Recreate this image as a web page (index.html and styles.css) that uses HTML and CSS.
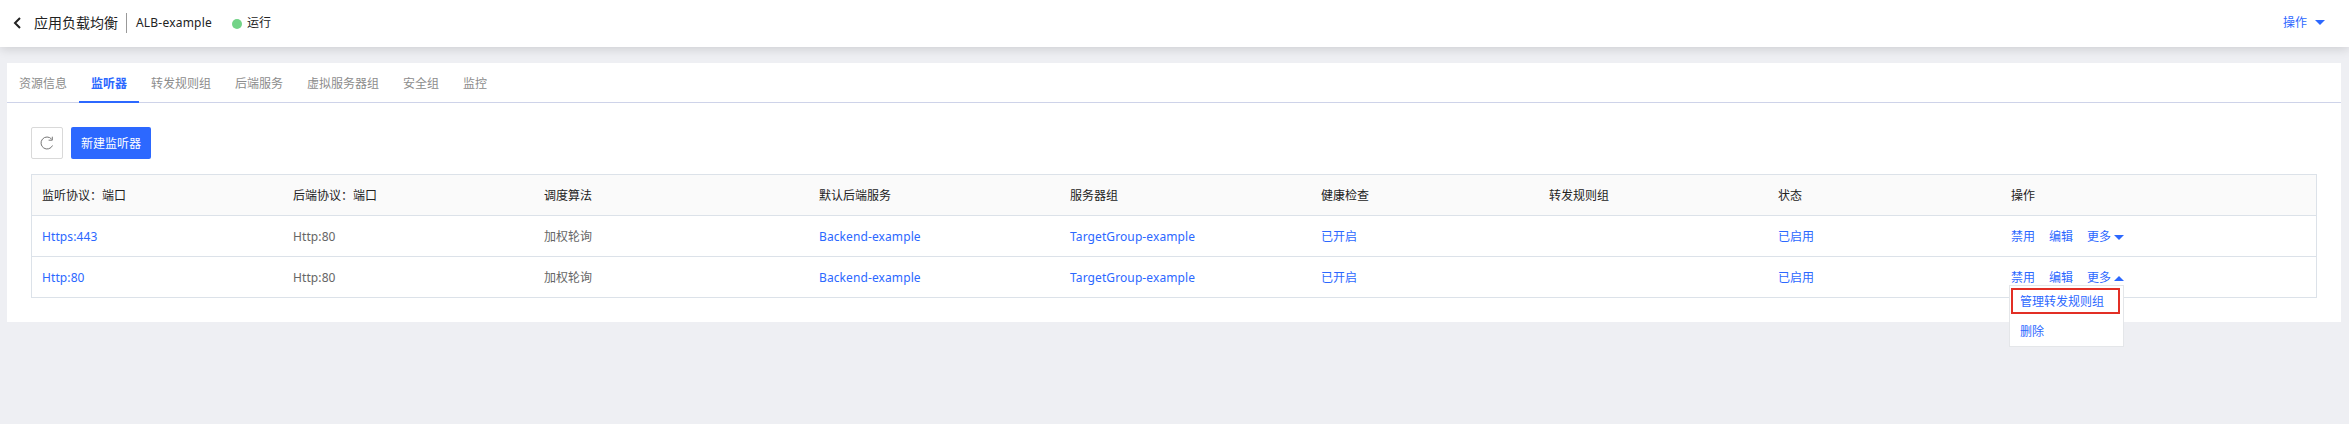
FILE: index.html
```html
<!DOCTYPE html>
<html lang="zh-CN">
<head>
<meta charset="utf-8">
<title>应用负载均衡</title>
<link rel="stylesheet" href="styles.css">
</head>
<body>
<header class="topbar">
  <svg class="back" width="8" height="12" viewBox="0 0 8 12"><path d="M7 1 2 6l5 5" fill="none" stroke="#222" stroke-width="2"/></svg>
  <h1 class="title">应用负载均衡</h1>
  <span class="name latin">ALB-example</span>
  <span class="dot"></span>
  <span class="state">运行</span>
  <a class="top-action">操作<svg class="caret" width="10" height="5" viewBox="0 0 10 5"><path d="M0 0h10L5 5z"/></svg></a>
</header>
<main class="panel">
  <nav class="tabs">
    <a class="tab">资源信息</a>
    <a class="tab active">监听器</a>
    <a class="tab">转发规则组</a>
    <a class="tab">后端服务</a>
    <a class="tab">虚拟服务器组</a>
    <a class="tab">安全组</a>
    <a class="tab">监控</a>
  </nav>
  <div class="toolbar">
    <button class="refresh"><svg width="14" height="14" viewBox="0 0 14 14"><path d="M11.6 3.1A6 6 0 1 0 12.5 9.5M12.3.7v3.5H8.6" fill="none" stroke="#777" stroke-width="1"/></svg></button>
    <button class="create">新建监听器</button>
  </div>
  <div class="table">
    <div class="row head">
      <span>监听协议：端口</span><span>后端协议：端口</span><span>调度算法</span><span>默认后端服务</span><span>服务器组</span><span>健康检查</span><span>转发规则组</span><span>状态</span><span>操作</span>
    </div>
    <div class="row">
      <a class="latin">Https:443</a><span class="latin">Http:80</span><span>加权轮询</span><a class="latin">Backend-example</a><a class="latin">TargetGroup-example</a><a>已开启</a><span></span><a>已启用</a>
      <div class="actions"><a>禁用</a><a>编辑</a><a>更多<svg class="caret" width="10" height="5" viewBox="0 0 10 5"><path d="M0 0h10L5 5z"/></svg></a></div>
    </div>
    <div class="row">
      <a class="latin">Http:80</a><span class="latin">Http:80</span><span>加权轮询</span><a class="latin">Backend-example</a><a class="latin">TargetGroup-example</a><a>已开启</a><span></span><a>已启用</a>
      <div class="actions"><a>禁用</a><a>编辑</a><a>更多<svg class="caret" width="10" height="5" viewBox="0 0 10 5"><path d="M0 5h10L5 0z"/></svg></a>
        <div class="menu"><a class="item marked">管理转发规则组</a><a class="item">删除</a></div>
      </div>
    </div>
  </div>
</main>
</body>
</html>
```
FILE: styles.css
```css
* { box-sizing: border-box; }
body {
  margin: 0;
  min-height: 424px;
  background: #eeeff3;
  font: 12px/18px "Noto Sans", "Noto Sans CJK SC", sans-serif;
  color: #666;
}
a { color: #2c68ff; }
.latin { letter-spacing: 0.1px; }
.caret { fill: #2c68ff; }

.topbar {
  display: flex;
  align-items: center;
  height: 47px;
  padding: 0 24px 2px 13px;
  background: #fff;
  color: #222;
  box-shadow: 0 2px 10px rgba(0, 0, 0, .14);
}
.back { margin-right: 13px; }
.title { margin: 0; font-size: 14px; font-weight: 400; line-height: 20px; }
.name {
  margin-left: 8px;
  padding-left: 9px;
  border-left: 1px solid #999;
  line-height: 20px;
  letter-spacing: 0.2px;
}
.dot {
  width: 10px;
  height: 10px;
  margin: 2px 5px 0 20px;
  border-radius: 50%;
  background: #72d387;
}
.top-action { display: flex; align-items: center; gap: 8px; margin-left: auto; }

.panel {
  height: 259px;
  margin: 16px 8px 0 7px;
  background: #fff;
}
.tabs {
  display: flex;
  height: 40px;
  border-bottom: 1px solid #ced3e9;
}
.tab {
  height: 40px;
  padding: 0 12px;
  line-height: 41px;
  color: #8c8c8c;
}
.tab.active {
  border-bottom: 2px solid #2c68ff;
  color: #2c68ff;
  font-weight: 700;
}
.toolbar { display: flex; gap: 8px; padding: 24px 24px 15px; }
button { font: inherit; border-radius: 2px; height: 32px; padding: 0; }
.refresh {
  display: grid;
  place-items: center;
  width: 32px;
  border: 1px solid #d9d9d9;
  background: #fff;
}
.create { width: 80px; padding-top: 1px; border: 0; background: #2c68ff; color: #fff; }

.table {
  margin: 0 24px;
  border: 1px solid #dce2e9;
  border-bottom: 0;
}
.row {
  display: grid;
  grid-template-columns: 251px 251px 275px 251px 251px 228px 229px 233px 1fr;
  align-items: center;
  height: 41px;
  padding: 2px 0 0 10px;
  border-bottom: 1px solid #dce2e9;
}
.head { background: #fafafa; color: #222; }
.actions { position: relative; display: flex; gap: 14px; }
.actions > a { display: flex; align-items: center; gap: 3px; }
.menu {
  position: absolute;
  top: 16px;
  left: -2px;
  width: 115px;
  height: 62px;
  padding: 3px;
  border: 1px solid #e4e6e9;
  background: #fff;
}
.item { display: block; height: 30px; padding: 4px 7px; line-height: 28px; }
.item.marked {
  width: 109px;
  height: 26px;
  margin: -1px 0 0 -2px;
  padding: 0 7px;
  border: 2px solid #e22f25;
  line-height: 23px;
}
```
